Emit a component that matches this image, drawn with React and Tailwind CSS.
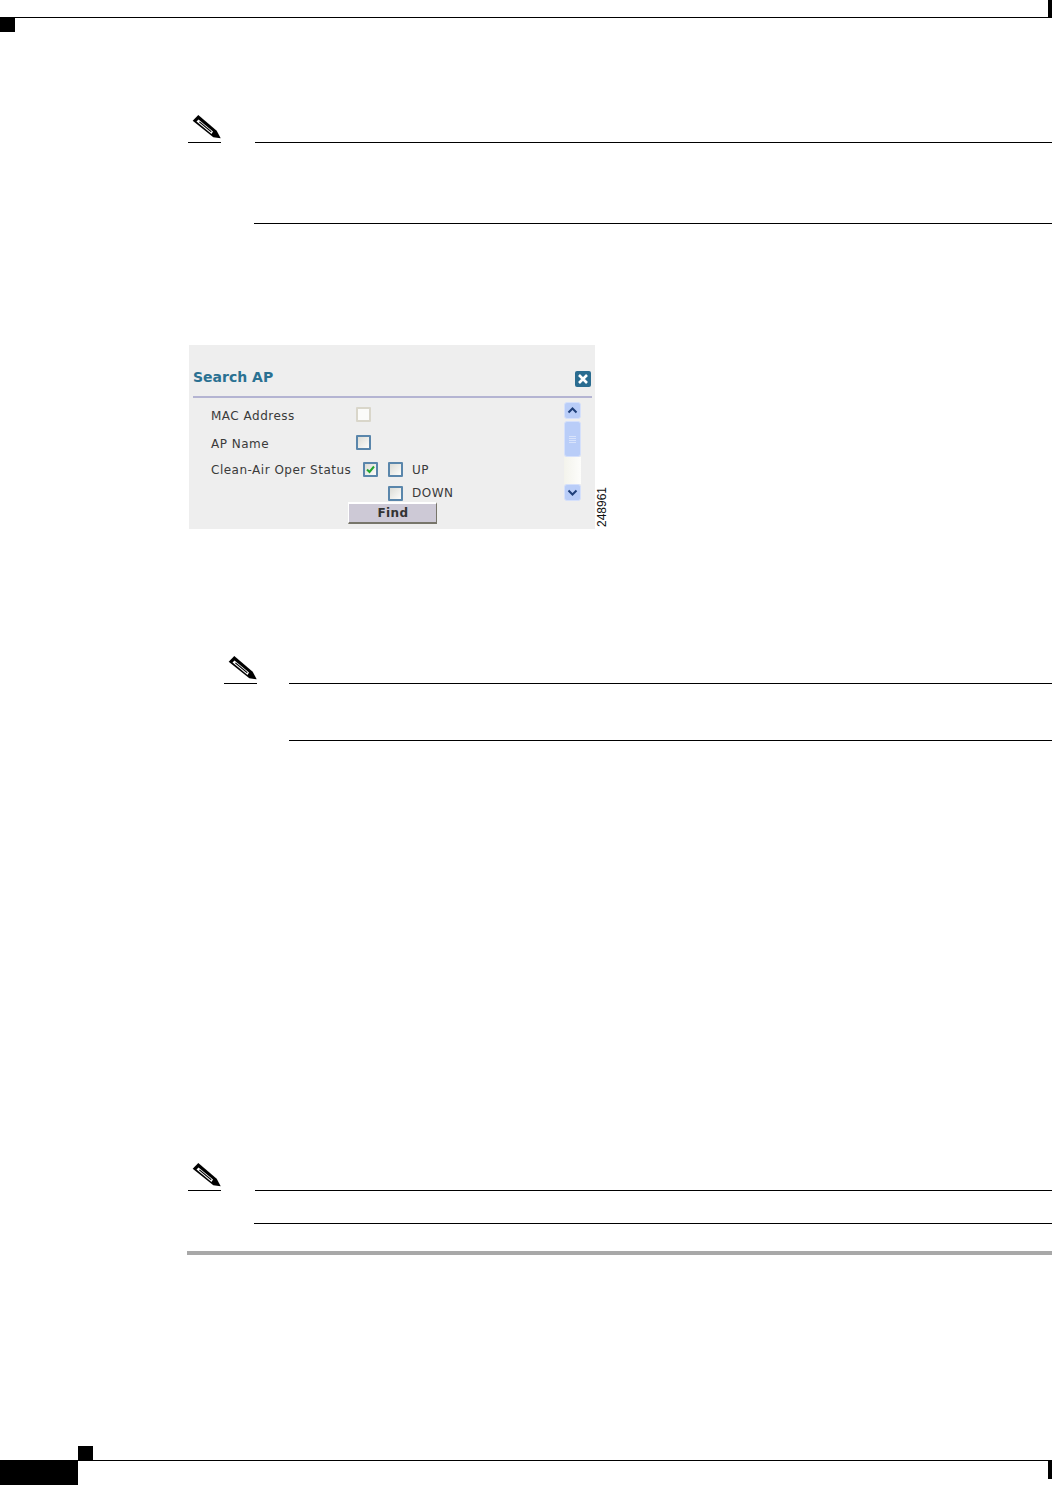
function NoteIcon() {
  return (
    <svg width="33" height="27" viewBox="0 0 33 27" className="block">
      <polygon points="4.7,5.7 10.3,0 28.7,15.7 32.7,23.3 25.3,22.3" fill="#000" />
      <polygon points="8.5,6.5 10.5,4.5 25,16.5 23.5,19" fill="#fff" />
      <polygon points="11,7.3 11.8,6.5 23.5,16.2 23,17.2" fill="#000" />
    </svg>
  );
}

function Note({ marginTop, left, gap, height, bottomShift = 0 }) {
  return (
    <div className="flex" style={{ marginTop, marginLeft: left }}>
      <div className="w-[33px] shrink-0 h-[29px] border-b border-black">
        <div className="h-[28px] pt-px">
          <NoteIcon />
        </div>
      </div>
      <div className="flex-1 mt-[28px] flex flex-col justify-between" style={{ marginLeft: gap, height }}>
        <div className="h-px bg-black" style={{ marginLeft: bottomShift }} />
        <div className="h-px bg-black" />
      </div>
    </div>
  );
}

function Box({ variant = "blue", checked = false, className = "" }) {
  const look =
    variant === "blank"
      ? "border-[#d9d6ca] bg-[#fbfbf9]"
      : "border-[#5a86ab] bg-gradient-to-br from-[#dcdcd6] to-[#fdfdfb]";
  return (
    <span className={`block w-[15px] h-[15px] shrink-0 border-2 rounded-[1px] ${look} ${className}`}>
      {checked && (
        <svg viewBox="0 0 11 11" className="block w-[11px] h-[11px]">
          <path d="M2 5.5 L4.5 8 L9 2.5" fill="none" stroke="#22a52e" strokeWidth="2" />
        </svg>
      )}
    </span>
  );
}

function ScrollButton({ up }) {
  return (
    <div className="h-[17px] rounded-[3px] border border-[#d5e0fb] bg-[#b9cdf8] flex items-center justify-center">
      <svg viewBox="0 0 11 7" className="w-[11px] h-[7px]">
        <path
          d={up ? "M1.5 5.5 L5.5 1.5 L9.5 5.5" : "M1.5 1.5 L5.5 5.5 L9.5 1.5"}
          fill="none"
          stroke="#1f3f7a"
          strokeWidth="2"
        />
      </svg>
    </div>
  );
}

function SearchFigure() {
  return (
    <div className="flex mt-[121px] ml-[189px]">
      <div className="w-[406px] h-[184px] bg-[#eeeeee] flex flex-col font-['DejaVu_Sans',sans-serif] text-[#3a3a3a] text-[12px]">
        <div className="h-[51px] pl-[4px] pr-[4px] flex justify-between">
          <div className="pt-[22px] font-bold text-[14px] leading-[20px] text-[#2a7192]">Search AP</div>
          <div className="pt-[26px]">
            <div className="w-[16px] h-[16px] rounded-[2px] bg-[#2a6c90] flex items-center justify-center">
              <svg viewBox="0 0 12 12" className="w-[12px] h-[12px]">
                <path d="M2 2 L10 10 M10 2 L2 10" stroke="#fff" strokeWidth="2.6" />
              </svg>
            </div>
          </div>
        </div>
        <div className="h-[2px] ml-[4px] mr-[3px] bg-[#b4b4d2]" />
        <div className="flex h-[104px] pt-[2px]">
          <div className="w-[375px] pl-[22px]">
            <div className="h-[28px] flex items-center">
              <span className="w-[145px] pt-[3px] tracking-[0.5px]">MAC Address</span>
              <Box variant="blank" />
            </div>
            <div className="h-[28px] flex items-center">
              <span className="w-[145px] pt-[3px] tracking-[0.5px]">AP Name</span>
              <Box />
            </div>
            <div className="h-[27px] flex items-center">
              <span className="w-[152px] tracking-[0.5px]">Clean-Air Oper Status</span>
              <Box checked />
              <Box className="ml-[10px]" />
              <span className="ml-[9px] tracking-[0.5px]">UP</span>
            </div>
            <div className="h-[19px] flex items-start pt-[3px] pl-[177px]">
              <Box />
              <span className="ml-[9px] leading-[15px] tracking-[0.5px]">DOWN</span>
            </div>
          </div>
          <div className="w-[17px] mt-[2px] flex flex-col">
            <ScrollButton up />
            <div className="mt-[2px] h-[36px] rounded-[3px] border border-[#d5e0fb] bg-[#b9cdf8] flex flex-col items-center justify-center gap-px">
              <div className="w-[7px] h-px bg-[#d8e3fb]" />
              <div className="w-[7px] h-px bg-[#d8e3fb]" />
              <div className="w-[7px] h-px bg-[#d8e3fb]" />
              <div className="w-[7px] h-px bg-[#d8e3fb]" />
            </div>
            <div className="h-[27px] bg-gradient-to-r from-[#f3f3ec] to-[#fdfdfb]" />
            <ScrollButton />
          </div>
        </div>
        <div className="pl-[159px]">
          <button className="block w-[89px] h-[22px] pl-[1px] bg-[#cdc9d6] border-t-2 border-l border-t-white border-l-white border-b-2 border-r border-b-[#77756a] border-r-[#77756a] font-bold text-[12px] leading-none tracking-[0.4px] text-[#333]">
            Find
          </button>
        </div>
      </div>
      <div className="self-end mb-[2px] ml-[1px] [writing-mode:vertical-rl] rotate-180 font-['Liberation_Sans',sans-serif] text-[12px] leading-[13px] text-[#111]">
        248961
      </div>
    </div>
  );
}

export default function App() {
  return (
    <div className="w-[1052px] h-[1485px] bg-white flex flex-col justify-between overflow-hidden">
      <div className="flex flex-col">
        <header>
          <div className="h-[18px] flex justify-end border-b border-black">
            <div className="w-[4px] h-[18px] bg-black" />
          </div>
          <div className="w-[15px] h-[14px] bg-black" />
        </header>

        <Note marginTop={82} left={188} gap={33} height={82} bottomShift={1} />
        <SearchFigure />
        <Note marginTop={126} left={224} gap={32} height={58} />
        <Note marginTop={421} left={188} gap={33} height={34} bottomShift={1} />
        <div className="mt-[27px] ml-[187px] h-[4px] bg-[#a8a8a8]" />
      </div>

      <footer>
        <div className="ml-[78px] w-[15px] h-[14px] bg-black" />
        <div className="h-[25px] flex">
          <div className="w-[78px] bg-black" />
          <div className="flex-1 border-t border-black flex justify-end">
            <div className="w-[4px] h-[18px] bg-black" />
          </div>
        </div>
      </footer>
    </div>
  );
}
